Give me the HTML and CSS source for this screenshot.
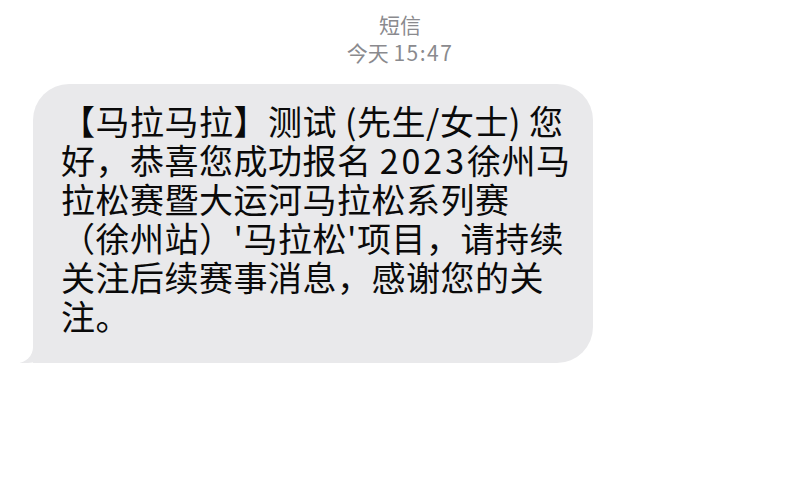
FILE: index.html
```html
<!DOCTYPE HTML><html>
<head>
  <title>短信</title>
  <meta name="viewport" content="width=device-width, initial-scale=1">
  <meta charset="utf-8">
  <link rel="stylesheet" href="styles.css">
</head>
<body>
  <div class="header">
    <div class="title">短信</div>
    <div class="time">今天 <span class="num">15:47</span></div>
  </div>
  <div class="thread">
    <div class="bubble">
      <p class="msg">【马拉马拉】测试 (先生/女士) 您<br>好，恭喜您成功报名 <span class="num">2023</span>徐州马<br>拉松赛暨大运河马拉松系列赛<br>（徐州站）'马拉松'项目，请持续<br>关注后续赛事消息，感谢您的关<br>注。</p>
    </div>
  </div>
</body>
</html>
```

FILE: styles.css
```css
body {
  margin: 0;
  background: #fff;
  font-family: "PingFang SC", "Noto Sans CJK SC", "Noto Sans", sans-serif;
}
.header {
  padding-top: 10px;
  text-align: center;
  color: #8a8a8e;
  font-size: 21px;
  line-height: 28px;
}
.time .num {
  letter-spacing: 1.5px;
}
.thread {
  padding: 18px 0 0 33px;
}
.bubble {
  position: relative;
  width: 560px;
  box-sizing: border-box;
  padding: 17px 0 28px 28px;
  background: #e9e9eb;
  border-radius: 36px 36px 36px 0;
}
.bubble::before {
  content: "";
  position: absolute;
  left: -13px;
  bottom: 0;
  width: 30px;
  height: 26px;
  background: #e9e9eb;
  border-bottom-right-radius: 22px;
}
.bubble::after {
  content: "";
  position: absolute;
  left: -40px;
  bottom: 0;
  width: 40px;
  height: 26px;
  background: #fff;
  border-bottom-right-radius: 16px;
}
.msg {
  margin: 0;
  font-size: 34px;
  line-height: 39px;
  letter-spacing: 0.5px;
  color: #0a0a0a;
  white-space: nowrap;
}
.msg .num {
  letter-spacing: 3px;
}
```
